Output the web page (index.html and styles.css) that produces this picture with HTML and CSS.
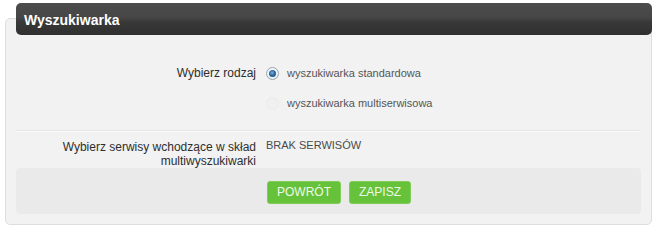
FILE: index.html
```html
<!DOCTYPE html>
<html lang="pl">
<head>
<meta charset="utf-8">
<title>Wyszukiwarka</title>
<link rel="stylesheet" href="styles.css">
</head>
<body>
<div class="page">
  <div class="panel">
    <div class="panel-head">Wyszukiwarka</div>
    <div class="panel-body">
      <div class="row row-type">
        <div class="label">Wybierz rodzaj</div>
        <div class="field">
          <label class="option">
            <span class="radio checked"></span>
            <span class="option-text">wyszukiwarka standardowa</span>
          </label>
          <label class="option">
            <span class="radio disabled"></span>
            <span class="option-text">wyszukiwarka multiserwisowa</span>
          </label>
        </div>
      </div>
      <div class="divider"></div>
      <div class="row row-services">
        <div class="label label-multi">Wybierz serwisy wchodzące w skład multiwyszukiwarki</div>
        <div class="field field-note">BRAK SERWISÓW</div>
      </div>
      <div class="actions">
        <button class="btn" type="button">POWRÓT</button>
        <button class="btn" type="button">ZAPISZ</button>
      </div>
    </div>
  </div>
</div>
</body>
</html>
```

FILE: styles.css
```css
html, body {
  margin: 0;
  padding: 0;
  background: #ffffff;
}

body {
  font-family: "Liberation Sans", Arial, sans-serif;
  color: #333333;
}

.page {
  padding: 18px 4px 0 5px;
}

.panel {
  background: #f2f2f2;
  border: 1px solid #dedede;
  border-radius: 5px;
  padding: 0 0 10px 0;
}

.panel-head {
  margin: -16px -1px 0 10px;
  height: 30px;
  padding: 2px 0 0 8px;
  line-height: 30px;
  font-size: 14px;
  font-weight: bold;
  color: #ffffff;
  border-radius: 5px;
  background: linear-gradient(to bottom, #4c4c4c 0%, #464646 45%, #383838 60%, #303030 100%);
}

.panel-body {
  padding: 0 10px;
}

.row {
  display: grid;
  grid-template-columns: 240px 1fr;
  column-gap: 10px;
}

.row-type {
  padding-top: 28px;
  padding-bottom: 17px;
}

.label {
  text-align: right;
  font-size: 12px;
  line-height: 20px;
  color: #2e2e2e;
}

.field {
  display: flex;
  flex-direction: column;
  gap: 10px;
}

.option {
  display: flex;
  align-items: center;
  height: 20px;
  gap: 8px;
}

.option-text {
  font-size: 11px;
  color: #555555;
}

.radio {
  box-sizing: border-box;
  width: 13px;
  height: 13px;
  border-radius: 50%;
  display: flex;
  align-items: center;
  justify-content: center;
}

.radio.checked {
  border: 1px solid #9aa6b0;
  background: radial-gradient(circle at 50% 40%, #ffffff 0%, #e4e8ec 100%);
}

.radio.checked::after {
  content: "";
  width: 7px;
  height: 7px;
  border-radius: 50%;
  background: radial-gradient(circle at 45% 40%, #7fb2de 0%, #2d6aa3 45%, #163f66 100%);
}

.radio.disabled {
  border: 1px solid #ebebeb;
  background: #f0f0f0;
}

.divider {
  border-top: 1px solid #e6e6e6;
  border-bottom: 1px solid #fafafa;
}

.row-services {
  padding-top: 8px;
}

.label-multi {
  line-height: 14px;
}

.field-note {
  font-size: 11px;
  line-height: 14px;
  color: #4a4a4a;
  margin-top: -2px;
}

.actions {
  display: flex;
  gap: 8px;
  background: #eaeaea;
  border-radius: 4px;
  padding: 13px 0 10px 251px;
}

.btn {
  box-sizing: border-box;
  height: 23px;
  padding: 0 9px;
  border: 1px solid #7fcd57;
  border-radius: 3px;
  background: #66c23a;
  color: #eef9e6;
  font-family: "Liberation Sans", Arial, sans-serif;
  font-size: 12px;
  line-height: 21px;
  cursor: pointer;
}
```
